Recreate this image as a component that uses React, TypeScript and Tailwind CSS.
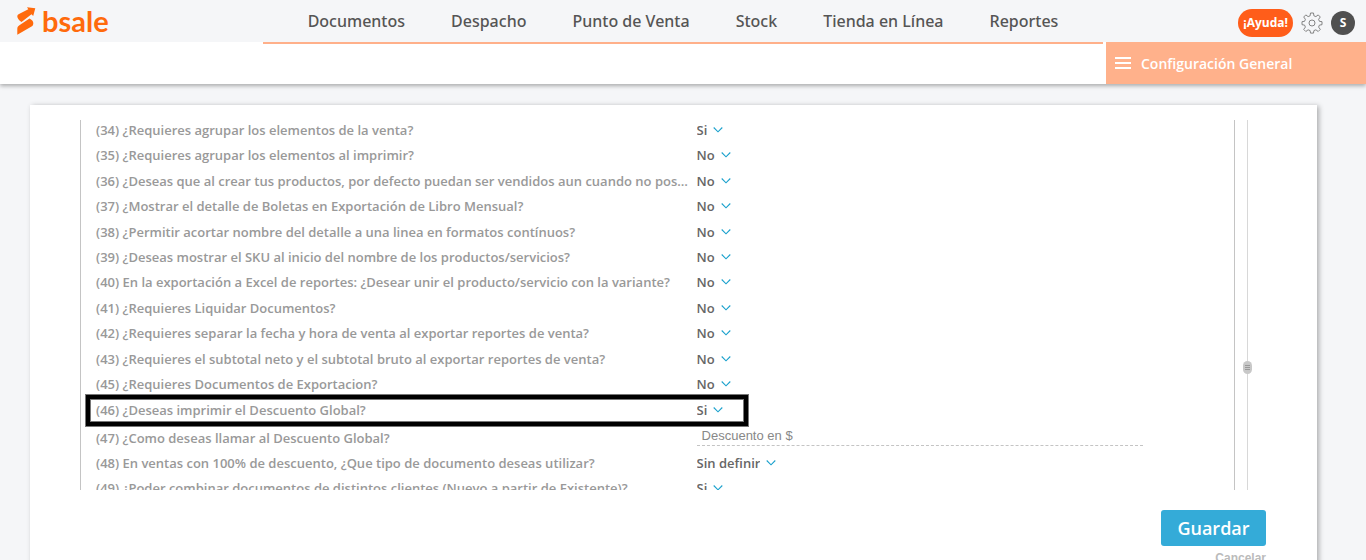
import { useState } from "react";

type Question = { id: number; text: string; value: string };

const menu = ["Documentos", "Despacho", "Punto de Venta", "Stock", "Tienda en Línea", "Reportes"];

const questions: Question[] = [
  { id: 34, text: "¿Requieres agrupar los elementos de la venta?", value: "Si" },
  { id: 35, text: "¿Requieres agrupar los elementos al imprimir?", value: "No" },
  {
    id: 36,
    text: "¿Deseas que al crear tus productos, por defecto puedan ser vendidos aun cuando no posean stock?",
    value: "No",
  },
  { id: 37, text: "¿Mostrar el detalle de Boletas en Exportación de Libro Mensual?", value: "No" },
  { id: 38, text: "¿Permitir acortar nombre del detalle a una linea en formatos contínuos?", value: "No" },
  { id: 39, text: "¿Deseas mostrar el SKU al inicio del nombre de los productos/servicios?", value: "No" },
  {
    id: 40,
    text: "En la exportación a Excel de reportes: ¿Desear unir el producto/servicio con la variante?",
    value: "No",
  },
  { id: 41, text: "¿Requieres Liquidar Documentos?", value: "No" },
  { id: 42, text: "¿Requieres separar la fecha y hora de venta al exportar reportes de venta?", value: "No" },
  { id: 43, text: "¿Requieres el subtotal neto y el subtotal bruto al exportar reportes de venta?", value: "No" },
  { id: 45, text: "¿Requieres Documentos de Exportacion?", value: "No" },
  { id: 46, text: "¿Deseas imprimir el Descuento Global?", value: "Si" },
];

const moreQuestions: Question[] = [
  { id: 48, text: "En ventas con 100% de descuento, ¿Que tipo de documento deseas utilizar?", value: "Sin definir" },
  { id: 49, text: "¿Poder combinar documentos de distintos clientes (Nuevo a partir de Existente)?", value: "Si" },
];

const rowClass = "relative grid grid-cols-[600fr_446fr] items-start";
const labelClass = "truncate pr-2 text-[13px] leading-5 font-semibold text-[#999]";

function Logo() {
  return (
    <a href="#" aria-label="bsale" className="flex items-center gap-1.5 text-[#ff6a0c]">
      <svg width="19" height="28" viewBox="0 0 19 28" fill="currentColor">
        <path d="M10 0.300 L18.300 1.200 L16.200 9 L14.500 7.300 L4.500 15 C2 13.500 0.300 11 0.300 9.500 C0.300 8.300 0.800 7.600 2 6.900 L11.300 2.200 Z" />
        <path d="M12.500 11.500 C15.500 13 16.300 14.500 16.300 16.300 C16.300 17.800 15.800 18.800 14.500 19.600 L0.300 27.700 L0.300 22 C0.300 20.200 1 19.200 2.400 18.300 Z" />
      </svg>
      <span className="font-[Lato,sans-serif] text-[29px] leading-7 font-bold">bsale</span>
    </a>
  );
}

function Gear() {
  return (
    <svg width="22" height="22" viewBox="0 0 22 22" fill="none" stroke="#777" strokeWidth="0.9" strokeLinejoin="round">
      <path d="M9.500 1h3l.4 2.800 2 .8 2.300-1.700 2.100 2.100-1.700 2.300.8 2 2.600.4v3l-2.600.4-.8 2 1.700 2.300-2.100 2.100-2.300-1.700-2 .8-.4 2.500h-3l-.4-2.500-2-.8-2.300 1.700-2.100-2.100 1.700-2.300-.8-2-2.600-.4v-3l2.600-.4.8-2-1.700-2.300 2.100-2.100 2.300 1.700 2-.8z" />
      <circle cx="11" cy="11" r="3" />
    </svg>
  );
}

function Chevron() {
  return (
    <svg
      width="10"
      height="6"
      viewBox="0 0 10 6"
      fill="none"
      stroke="#1ba1cd"
      strokeWidth="1.1"
      className="pointer-events-none"
    >
      <path d="M0.700 0.500 L5 4.800 L9.300 0.500" />
    </svg>
  );
}

function SelectRow({ question, highlighted }: { question: Question; highlighted?: boolean }) {
  const [value, setValue] = useState(question.value);
  const options = question.value === "Sin definir" ? ["Sin definir", "Boleta", "Factura"] : ["Si", "No"];

  return (
    <li className={rowClass}>
      <label htmlFor={`q-${question.id}`} className={labelClass}>
        ({question.id}) {question.text}
      </label>
      <div className="flex items-center gap-1.5">
        <select
          id={`q-${question.id}`}
          value={value}
          onChange={(e) => setValue(e.target.value)}
          className="field-sizing-content appearance-none bg-transparent text-[13px] leading-5 font-semibold text-[#666] outline-none"
        >
          {options.map((option) => (
            <option key={option}>{option}</option>
          ))}
        </select>
        <Chevron />
      </div>
      {highlighted && (
        <div className="pointer-events-none absolute -top-1.5 -left-[11px] h-[33px] w-[664px] border border-[#777]">
          <div className="h-full border-4 border-black">
            <div className="h-full border border-[#777]" />
          </div>
        </div>
      )}
    </li>
  );
}

export default function App() {
  return (
    <div className="flex h-screen flex-col overflow-hidden bg-[#f5f6f8] font-['Open_Sans',sans-serif]">
      <header className="relative shadow-[0_2px_4px_rgba(0,0,0,0.3)]">
        <div className="flex h-[42px] items-center justify-between pr-[11px] pl-[17px]">
          <Logo />
          <div className="flex items-center gap-2 pt-1">
            <button className="h-7 rounded-full bg-[#ff5d1a] px-[5px] text-[12px] font-bold text-white">¡Ayuda!</button>
            <button aria-label="Configuración">
              <Gear />
            </button>
            <button className="size-6 rounded-full bg-[#505050] text-[12px] font-bold text-white">S</button>
          </div>
        </div>
        <nav className="absolute top-0 right-[263px] left-[263px] flex h-11 justify-center gap-[46px] border-b-2 border-[#ffb08a]">
          {menu.map((item) => (
            <a
              key={item}
              href="#"
              className="font-['Noto_Sans',sans-serif] text-[16px] leading-[42px] font-medium whitespace-nowrap text-[#555]"
            >
              {item}
            </a>
          ))}
        </nav>
        <div className="flex h-[42px] justify-end bg-white">
          <button className="flex w-[260px] items-center gap-[10px] bg-[#ffb18b] pl-[9px] text-[14px] font-semibold text-white">
            <svg width="16" height="12" viewBox="0 0 16 12" fill="currentColor">
              <path d="M0 0h16v2H0zM0 5h16v2H0zM0 10h16v2H0z" />
            </svg>
            Configuración General
          </button>
        </div>
      </header>

      <main className="mt-[21px] mr-[49px] ml-[30px] grow bg-white pt-[15px] pr-[51px] pl-[50px] shadow-[2px_1px_5px_rgba(0,0,0,0.3)]">
        <div className="flex h-[370px]">
          <div className="min-w-0 flex-1 overflow-hidden border-x border-[#c4c4c4] pr-[91px] pl-[15px]">
            <ul className="grid h-[305px] auto-rows-fr">
              {questions.map((question) => (
                <SelectRow key={question.id} question={question} highlighted={question.id === 46} />
              ))}
            </ul>
            <div className="grid h-7 grid-cols-[600fr_446fr] items-start">
              <label htmlFor="q-47" className={`${labelClass} mt-[3px]`}>
                (47) ¿Como deseas llamar al Descuento Global?
              </label>
              <input
                id="q-47"
                defaultValue="Descuento en $"
                className="h-[21px] w-full border-b border-dashed border-[#c4c4c4] px-[5px] font-['Liberation_Sans',sans-serif] text-[13px] text-[#888] outline-none"
              />
            </div>
            <ul className="grid auto-rows-[25px]">
              {moreQuestions.map((question) => (
                <SelectRow key={question.id} question={question} />
              ))}
            </ul>
          </div>

          <div className="mr-[14px] ml-2 flex w-[9px] flex-col items-center">
            <div className="h-[65%] w-px bg-[#d8d8d8]" />
            <div className="flex h-[13px] w-full flex-col items-center justify-center gap-px rounded-full bg-[#c8c8c8]">
              <span className="h-px w-[5px] bg-[#999]" />
              <span className="h-px w-[5px] bg-[#999]" />
              <span className="h-px w-[5px] bg-[#999]" />
            </div>
            <div className="w-px flex-1 bg-[#d8d8d8]" />
          </div>
        </div>

        <div className="mt-5 flex flex-col items-end">
          <button className="h-9 w-[105px] rounded-[3px] bg-[#34abd8] text-[18px] font-semibold text-white">Guardar</button>
          <button className="mt-1 font-['Liberation_Sans',sans-serif] text-[12px] leading-4 font-bold text-[#bbb]">
            Cancelar
          </button>
        </div>
      </main>
    </div>
  );
}
